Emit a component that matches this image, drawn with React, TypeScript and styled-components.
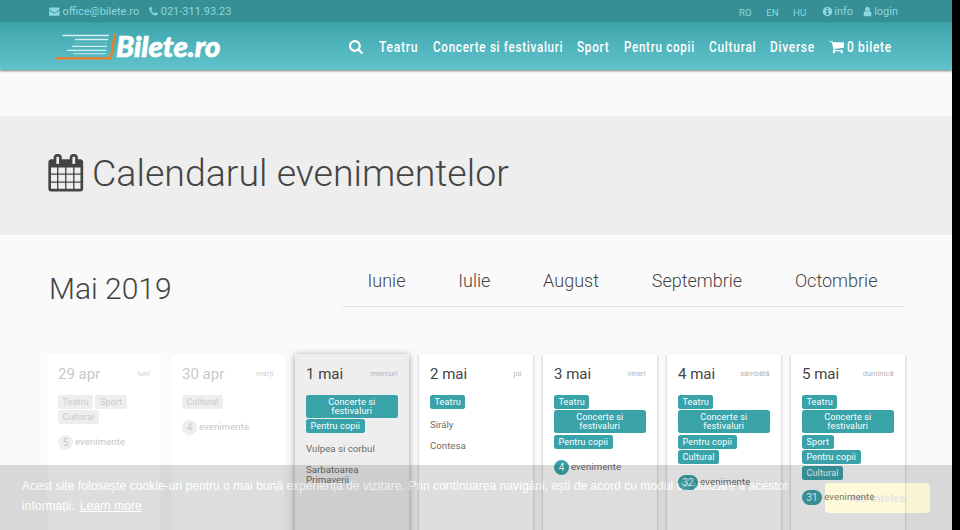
import React from "react";
import styled, { createGlobalStyle, css } from "styled-components";

const GlobalStyle = createGlobalStyle`
  * { box-sizing: border-box; }
  html, body { margin: 0; padding: 0; }
  body {
    background: #000;
    font-family: Roboto, "Liberation Sans", sans-serif;
    color: #444;
    overflow: hidden;
  }
`;

const Page = styled.div`
  width: 952px;
  height: 530px;
  overflow: hidden;
  background: #fafafa;
`;

const Header = styled.header`
  height: 70px;
  display: flex;
  flex-direction: column;
  box-shadow: 0 1px 2px rgba(0, 0, 0, 0.5);
`;

const TopBar = styled.div`
  height: 22px;
  display: flex;
  justify-content: space-between;
  align-items: center;
  padding: 1px 54px 0 49px;
  background: #368f94;
  color: #8ad8dd;
  font-size: 11px;
  line-height: 22px;
`;

const Group = styled.div<{ $gap: number }>`
  display: flex;
  align-items: center;
  gap: ${(p) => p.$gap}px;
`;

const IconText = styled.span<{ $gap?: number }>`
  display: flex;
  align-items: center;
  gap: ${(p) => p.$gap ?? 3}px;
  white-space: nowrap;
`;

const Langs = styled.div`
  display: flex;
  gap: 14.5px;
  margin-right: 7px;
`;

const Lang = styled.span`
  font-size: 9.7px;
  padding-top: 2px;
`;

const NavBar = styled.div`
  height: 48px;
  display: flex;
  justify-content: space-between;
  padding: 0 60px 0 55px;
  background: linear-gradient(#3fa5ac, #61c3cc);
  border-top: 1px solid #3a9ca3;
`;

const Nav = styled.nav`
  display: flex;
  align-items: center;
  gap: 15px;
  color: #fff;
`;

const NavItem = styled.a<{ $w: number }>`
  display: flex;
  align-items: center;
  width: ${(p) => p.$w}px;
  height: 46px;
`;

const Glyph = styled.svg<{ $size: number }>`
  width: ${(p) => p.$size}px;
  height: ${(p) => p.$size}px;
  fill: currentColor;
  flex: none;
`;

const LogoArt = styled.svg`
  width: 170px;
  height: 40px;
  margin-top: 5px;
  display: block;
`;

const NavText = styled.svg`
  height: 24px;
  overflow: visible;
  font-family: Roboto, sans-serif;
  font-weight: 500;
  font-size: 15px;
  letter-spacing: 0.9px;
  fill: #fff;
`;

const Banner = styled.section`
  height: 119px;
  margin-top: 46px;
  background: #eee;
  display: flex;
  align-items: center;
  gap: 7.5px;
  padding: 0 0 5px 47px;
`;

const Title = styled.h1`
  margin: 0;
  font-size: 37.5px;
  font-weight: 300;
  line-height: 46px;
`;

const MonthRow = styled.section`
  display: flex;
  justify-content: space-between;
  height: 72px;
  padding: 0 47.5px 0 49px;
`;

const Month = styled.h2`
  margin: 31px 0 0;
  font-size: 30px;
  line-height: 46px;
  font-weight: 300;
`;

const Months = styled.div`
  width: 563px;
  display: flex;
  justify-content: space-between;
  padding: 34px 27px 0 26px;
  border-bottom: 1px solid #e4e4e4;
  font-size: 18px;
  font-weight: 300;
  line-height: 24px;
`;

const Grid = styled.div`
  display: grid;
  grid-template-columns: repeat(7, 114px);
  column-gap: 10px;
  margin: 47px 0 0 47px;
  height: 220px;
`;

const Tag = styled.span`
  min-height: 14px;
  margin-bottom: 1.4px;
  padding: 3px 4.5px 2px;
  border-radius: 2.5px;
  background: #3aa3aa;
  color: #fff;
  font-size: 9px;
  line-height: 9px;
  letter-spacing: 0.15px;
  text-align: center;
`;

const Badge = styled.span`
  height: 15px;
  min-width: 15px;
  padding: 0 4.5px;
  border-radius: 8px;
  background: #3aa3aa;
  color: #fff;
  font-size: 10px;
  line-height: 15px;
  text-align: center;
`;

const CardHead = styled.div`
  display: flex;
  justify-content: space-between;
  align-items: center;
  height: 20px;
  margin-bottom: 11px;
`;

const DateText = styled.span`
  font-size: 15px;
`;

const DayText = styled.span`
  padding-bottom: 1px;
  font-size: 7.5px;
  color: #b4b4b4;
`;

const Tags = styled.div`
  display: flex;
  flex-wrap: wrap;
  column-gap: 2px;
`;

const Count = styled.div`
  display: flex;
  align-items: center;
  gap: 2px;
  margin-top: 9.5px;
  color: #666;
`;

const CountLabel = styled.span`
  padding-bottom: 2px;
  font-size: 9.5px;
  letter-spacing: 0.12px;
`;

const Card = styled.article<{ $state: "past" | "today" | "next" }>`
  background: #fff;
  padding: 10px 11.5px 10px 11px;
  box-shadow: 0 0.5px 3px rgba(0, 0, 0, 0.28);
  ${(p) => p.$state === "today" && css`
    background: #eee;
    box-shadow: 0 1px 7px rgba(0, 0, 0, 0.36);
  `}
  ${(p) => p.$state === "past" && css`
    box-shadow: 0 0 2px rgba(0, 0, 0, 0.04);
    color: #c9c9c9;
    ${Tag}, ${Badge} { background: #eee; color: #cbcbcb; }
    ${Count} { color: #c4c4c4; }
    ${DayText} { color: #d2d2d2; }
  `}
`;

const EventName = styled.p`
  margin: 11px 0 0;
  font-size: 9.7px;
  line-height: 10px;
  color: #6c6c6c;

  ${Tags} + & { margin-top: 9.6px; }
`;

const CookieBar = styled.aside`
  position: fixed;
  left: 0;
  bottom: 0;
  width: 952px;
  height: 65px;
  display: flex;
  align-items: center;
  padding: 0 22px;
  background: #1c1c1c;
  opacity: 0.15;
  color: #fff;
  font-family: "Liberation Sans", Arial, sans-serif;
  font-size: 12px;
  line-height: 20px;
`;

const CookieText = styled.p`
  margin: -3px 0 0;
  width: 803px;
  letter-spacing: 0.045px;
`;

const CookieLink = styled.a`
  margin-left: 2px;
  text-decoration: underline;
`;

const CookieButton = styled.button`
  width: 105px;
  height: 30px;
  padding: 0;
  border: 0;
  border-radius: 4px;
  background: #f1d600;
  color: #3c3655;
  font: bold 11px "Liberation Sans", Arial, sans-serif;
`;

const icons = {
  search: "M1152 832q0-185-131.5-316.5t-316.5-131.5-316.5 131.5-131.5 316.5 131.5 316.5 316.5 131.5 316.5-131.5 131.5-316.5zm512 832q0 52-38 90t-90 38q-54 0-90-38l-343-342q-179 124-399 124-143 0-273.5-55.5t-225-150-150-225-55.5-273.5 55.5-273.5 150-225 225-150 273.5-55.5 273.5 55.5 225 150 150 225 55.5 273.5q0 220-124 399l343 343q37 37 37 90z",
  cart: "M704 1536q0 52-38 90t-90 38-90-38-38-90 38-90 90-38 90 38 38 90zm896 0q0 52-38 90t-90 38-90-38-38-90 38-90 90-38 90 38 38 90zm128-1088v512q0 24-16.5 42.5t-40.5 21.5l-1044 122q13 60 13 70 0 16-24 64h920q26 0 45 19t19 45-19 45-45 19h-1024q-26 0-45-19t-19-45q0-11 8-31.5t16-36 21.5-40 15.5-29.5l-177-823h-204q-26 0-45-19t-19-45 19-45 45-19h256q16 0 28.5 6.5t19.5 15.5 13 24.5 8 26 5.5 29.5 4.5 26h1201q26 0 45 19t19 45z",
  calendar: "M192 1664h288v-288h-288v288zm352 0h320v-288h-320v288zm-352-352h288v-320h-288v320zm352 0h320v-320h-320v320zm-352-384h288v-288h-288v288zm736 736h320v-288h-320v288zm-384-736h320v-288h-320v288zm768 736h288v-288h-288v288zm-384-352h320v-320h-320v320zm-352-864v-288q0-13-9.5-22.5t-22.5-9.5h-64q-13 0-22.5 9.5t-9.5 22.5v288q0 13 9.5 22.5t22.5 9.5h64q13 0 22.5-9.5t9.5-22.5zm736 864h288v-320h-288v320zm-384-384h320v-288h-320v288zm384 0h288v-288h-288v288zm32-480v-288q0-13-9.5-22.5t-22.5-9.5h-64q-13 0-22.5 9.5t-9.5 22.5v288q0 13 9.5 22.5t22.5 9.5h64q13 0 22.5-9.5t9.5-22.5zm384-64v1280q0 52-38 90t-90 38h-1408q-52 0-90-38t-38-90v-1280q0-52 38-90t90-38h128v-96q0-66 47-113t113-47h64q66 0 113 47t47 113v96h384v-96q0-66 47-113t113-47h64q66 0 113 47t47 113v96h128q52 0 90 38t38 90z",
  user: "M1536 1399q0 109-62.5 187t-150.5 78h-854q-88 0-150.5-78t-62.5-187q0-85 8.5-160.5t31.5-152 58.5-131 94-89 134.5-34.5q131 128 313 128t313-128q76 0 134.5 34.5t94 89 58.5 131 31.5 152 8.5 160.5zm-256-887q0 159-112.5 271.5t-271.5 112.5-271.5-112.5-112.5-271.5 112.5-271.5 271.5-112.5 271.5 112.5 112.5 271.5z",
  phone: "M1600 1240q0 27-10 70.5t-21 68.5q-21 50-122 106-94 51-186 51-27 0-53-3.5t-57.5-12.5-47-14.5-55.5-20.5-49-18q-98-35-175-83-127-79-264-216t-216-264q-48-77-83-175-3-9-18-49t-20.5-55.5-14.5-47-12.5-57.5-3.5-53q0-92 51-186 56-101 106-122 25-11 68.5-21t70.5-10q14 0 21 3 18 6 53 76 11 19 30 54t35 63.5 31 53.5q3 4 17.5 25t21.5 35.5 7 28.5q0 20-28.5 50t-62 55-62 53-28.5 46q0 9 5 22.5t8.5 20.5 14 24 11.5 19q76 137 174 235t235 174q2 1 19 11.5t24 14 20.5 8.5 22.5 5q18 0 46-28.5t53-62 55-62 50-28.5q14 0 28.5 7t35.5 21.5 25 17.5q25 15 53.5 31t63.5 35 54 30q70 35 76 53 3 7 3 21z",
  envelope: "M1792 710v794q0 66-47 113t-113 47h-1472q-66 0-113-47t-47-113v-794q44 49 101 87 362 246 497 345 57 42 92.5 65.5t94.5 48 110 24.5h2q51 0 110-24.5t94.5-48 92.5-65.5q170-123 498-345 57-39 100-87zm0-294q0 79-49 151t-122 123q-376 261-468 325-10 7-42.5 31t-54 38.5-52 32.5-57.5 27-50 9h-2q-23 0-50-9t-57.5-27-52-32.5-54-38.5-42.5-31q-91-64-262-182.5t-205-142.5q-62-42-117-115.5t-55-136.5q0-78 41.5-130t118.5-52h1472q65 0 112.5 47t47.5 113z",
  info: "M1152 1376v-160q0-14-9-23t-23-9h-96v-512q0-14-9-23t-23-9h-320q-14 0-23 9t-9 23v160q0 14 9 23t23 9h96v320h-96q-14 0-23 9t-9 23v160q0 14 9 23t23 9h448q14 0 23-9t9-23zm-128-896v-160q0-14-9-23t-23-9h-192q-14 0-23 9t-9 23v160q0 14 9 23t23 9h192q14 0 23-9t9-23zm640 416q0 209-103 385.5t-279.5 279.5-385.5 103-385.5-103-279.5-279.5-103-385.5 103-385.5 279.5-279.5 385.5-103 385.5 103 279.5 279.5 103 385.5z",
};

const Icon = ({ name, size }: { name: keyof typeof icons; size: number }) => (
  <Glyph $size={size} viewBox="0 0 1792 1792" aria-hidden="true">
    <path d={icons[name]} />
  </Glyph>
);

const Logo = () => (
  <LogoArt viewBox="55 28 170 40">
    <g stroke="#d3f0f2" strokeWidth="1.3">
      <path d="M62.5 35.5H109" />
      <path d="M75 39.5H108" />
      <path d="M72 46.3H107" />
      <path d="M67 50.4H106" />
      <path d="M73 53.6H105.5" opacity="0.7" />
      <path d="M74 43H107" opacity="0.15" />
    </g>
    <path d="M56 58.3H110.8L114.8 33.8" fill="none" stroke="#f47b20" strokeWidth="2.3" />
    <text x="116" y="57.2" fill="#fff" stroke="#fff" strokeWidth="0.7" fontFamily="Lato, sans-serif" fontWeight="900" fontStyle="italic" fontSize="29" textLength="104.5" lengthAdjust="spacingAndGlyphs">Bilete.ro</text>
  </LogoArt>
);

const NavLabel = ({ text, width }: { text: string; width: number }) => (
  <NavText width={width}>
    <text x="0" y="16.5" textLength={width + 0.8} lengthAdjust="spacingAndGlyphs">{text}</text>
  </NavText>
);

const navItems: [string, number][] = [
  ["Teatru", 38.5], ["Concerte si festivaluri", 129.5], ["Sport", 31.5],
  ["Pentru copii", 70], ["Cultural", 46.5], ["Diverse", 44],
];

type Day = {
  date: string;
  day: string;
  state: "past" | "today" | "next";
  tags: string[];
  count?: number;
  events?: string[];
};

const C = "Concerte si festivaluri";
const days: Day[] = [
  { date: "29 apr", day: "luni", state: "past", tags: ["Teatru", "Sport", "Cultural"], count: 5 },
  { date: "30 apr", day: "marți", state: "past", tags: ["Cultural"], count: 4 },
  { date: "1 mai", day: "miercuri", state: "today", tags: [C, "Pentru copii"], events: ["Vulpea si corbul", "Sarbatoarea Primaverii"] },
  { date: "2 mai", day: "joi", state: "next", tags: ["Teatru"], events: ["Sirály", "Contesa"] },
  { date: "3 mai", day: "vineri", state: "next", tags: ["Teatru", C, "Pentru copii"], count: 4 },
  { date: "4 mai", day: "sâmbătă", state: "next", tags: ["Teatru", C, "Pentru copii", "Cultural"], count: 32 },
  { date: "5 mai", day: "duminică", state: "next", tags: ["Teatru", C, "Sport", "Pentru copii", "Cultural"], count: 31 },
];

export default function App() {
  return (
    <>
      <GlobalStyle />
      <Page>
        <Header>
          <TopBar>
            <Group $gap={8.5}>
              <IconText><Icon name="envelope" size={10.5} />office@bilete.ro</IconText>
              <IconText $gap={2}><Icon name="phone" size={11} />021-311.93.23</IconText>
            </Group>
            <Group $gap={8.5}>
              <Langs><Lang>RO</Lang><Lang>EN</Lang><Lang>HU</Lang></Langs>
              <IconText $gap={1.5}><Icon name="info" size={11} />info</IconText>
              <IconText $gap={1.5}><Icon name="user" size={11} />login</IconText>
            </Group>
          </TopBar>
          <NavBar>
            <Logo />
            <Nav>
              <NavItem $w={15}><Icon name="search" size={15} /></NavItem>
              {navItems.map(([text, w]) => (
                <NavItem key={text} $w={w}><NavLabel text={text} width={w} /></NavItem>
              ))}
              <NavItem $w={63}>
                <IconText $gap={2.5}><Icon name="cart" size={15.5} /><NavLabel text="0 bilete" width={44} /></IconText>
              </NavItem>
            </Nav>
          </NavBar>
        </Header>
        <Banner>
          <Icon name="calendar" size={37.5} />
          <Title>Calendarul evenimentelor</Title>
        </Banner>
        <MonthRow>
          <Month>Mai 2019</Month>
          <Months>
            {["Iunie", "Iulie", "August", "Septembrie", "Octombrie"].map((m) => <span key={m}>{m}</span>)}
          </Months>
        </MonthRow>
        <Grid>
          {days.map((d) => (
            <Card key={d.date} $state={d.state}>
              <CardHead><DateText>{d.date}</DateText><DayText>{d.day}</DayText></CardHead>
              <Tags>{d.tags.map((t) => <Tag key={t}>{t}</Tag>)}</Tags>
              {d.count && <Count><Badge>{d.count}</Badge><CountLabel>evenimente</CountLabel></Count>}
              {d.events?.map((e) => <EventName key={e}>{e}</EventName>)}
            </Card>
          ))}
        </Grid>
      </Page>
      <CookieBar>
        <CookieText>
          Acest site folosește cookie-uri pentru o mai bună experiență de vizitare. Prin continuarea navigării, ești de acord cu modul de utilizare a acestor informații. <CookieLink>Learn more</CookieLink>
        </CookieText>
        <CookieButton>Am înteles</CookieButton>
      </CookieBar>
    </>
  );
}
